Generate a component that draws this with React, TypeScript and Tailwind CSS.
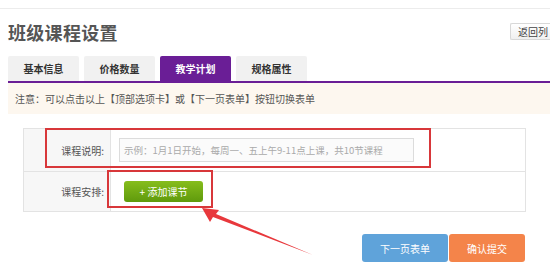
import React from "react";

const TABS = ["基本信息", "价格数量", "教学计划", "规格属性"];

export default function App() {
  return (
    <div
      className="relative w-[550px] h-[278px] overflow-hidden bg-white text-[#555]"
      style={{ fontFamily: '"Noto Sans CJK SC", "Noto Sans", sans-serif' }}
    >
      {/* top rule */}
      <div className="h-[9px] border-b border-[#ececec]" />

      {/* header */}
      <div className="flex items-start justify-between pl-[8px] pt-[11px] h-[47px]">
        <h1 className="text-[18px] leading-[24px] font-bold text-[#555] tracking-[0.3px]">班级课程设置</h1>
        <button className="mt-[3px] h-[17px] w-[40px] border border-r-0 border-[#d8d8d8] rounded-l-[2px] bg-gradient-to-b from-white to-[#f0f0f0] text-[10px] leading-[15px] text-[#444] text-left pl-[7px] whitespace-nowrap overflow-hidden">
          返回列
        </button>
      </div>

      {/* tabs */}
      <div className="flex gap-[5px] ml-[8px] border-b-2 border-[#6a1e96]">
        {TABS.map((t, i) => (
          <div
            key={t}
            className={
              i === 2
                ? "w-[71px] h-[25px] flex items-center justify-center text-[10px] font-bold text-white bg-[#6a1e96] rounded-t-[2px]"
                : "w-[71px] h-[25px] flex items-center justify-center text-[10px] font-bold text-[#333] bg-[#f1f1f1] rounded-t-[2px]"
            }
          >
            {t}
          </div>
        ))}
      </div>

      {/* notice */}
      <div className="ml-[8px] h-[31px] bg-[#fdf7ef] pl-[7px] flex items-center text-[10px] text-[#555]">
        注意：可以点击以上【顶部选项卡】或【下一页表单】按钮切换表单
      </div>

      {/* form table */}
      <div className="ml-[23px] mt-[14px] w-[503px] border border-[#e3e3e3]">
        <div className="flex h-[43px] border-b border-[#e3e3e3]">
          <div className="w-[87px] bg-[#f7f7f7] border-r border-[#e3e3e3] flex items-center justify-end pr-[6px] text-[10px] text-[#555]">
            课程说明:
          </div>
          <div className="flex items-center pl-[8px]">
            <div className="w-[295px] h-[24px] border border-[#dcdcdc] bg-[#fbfbfb] flex items-center pl-[4px] text-[9.5px] text-[#aaa] whitespace-nowrap">
              示例：1月1日开始，每周一、五上午9-11点上课，共10节课程
            </div>
          </div>
        </div>
        <div className="flex h-[39px]">
          <div className="w-[87px] bg-[#f7f7f7] border-r border-[#e3e3e3] flex items-center justify-end pr-[6px] text-[10px] text-[#555]">
            课程安排:
          </div>
          <div className="flex items-center pl-[13px]">
            <button className="w-[79px] h-[21px] rounded-[3px] bg-gradient-to-b from-[#86bd1c] to-[#5f9a0c] text-white text-[10px] flex items-center justify-center">
              + 添加课节
            </button>
          </div>
        </div>
      </div>

      {/* footer buttons */}
      <div className="flex justify-end gap-[1px] mr-[25px] mt-[22px]">
        <button className="w-[86px] h-[28px] rounded-[3px] bg-[#5fa3da] text-white text-[10px]">下一页表单</button>
        <button className="w-[76px] h-[28px] rounded-[3px] bg-[#f4844a] text-white text-[10px]">确认提交</button>
      </div>

      {/* annotations */}
      <div className="absolute left-[45px] top-[128px] w-[386px] h-[40px] border-[2.5px] border-[#d8373a]" />
      <div className="absolute left-[107px] top-[170px] w-[106px] h-[38px] border-[2.5px] border-[#d8373a]" />
      <svg className="absolute left-0 top-0" width="550" height="278">
        <polygon points="202,208 219,210 216,214 313,255 213,217 210,222" fill="#e8383c" />
      </svg>
    </div>
  );
}
